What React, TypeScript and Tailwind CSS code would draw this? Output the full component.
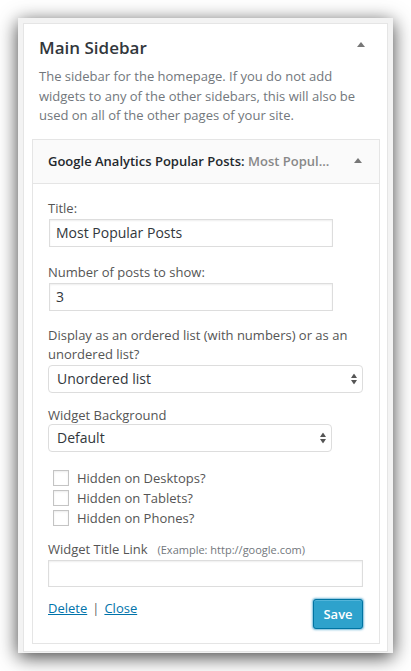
import React from "react";

function SelectArrows() {
  return (
    <svg width="6" height="11" viewBox="0 0 6 11" className="absolute right-[5px] top-1/2 -translate-y-1/2">
      <path d="M3 0 L6 4.5 L0 4.5 Z" fill="#555" />
      <path d="M3 11 L6 6.5 L0 6.5 Z" fill="#555" />
    </svg>
  );
}

function Triangle() {
  return (
    <svg width="8" height="5" viewBox="0 0 8 5" className="shrink-0">
      <path d="M4 0 L8 5 L0 5 Z" fill="#777" />
    </svg>
  );
}

function Checkbox({ label }: { label: string }) {
  return (
    <div className="flex items-center h-[20px]">
      <div className="w-[16px] h-[16px] ml-[5px] border border-[#c4c4c4] bg-white shadow-[inset_0_1px_2px_rgba(0,0,0,0.08)]" />
      <span className="ml-[8px] text-[13px] leading-[20px] text-[#555]">{label}</span>
    </div>
  );
}

export default function App() {
  return (
    <div className="w-[411px] h-[671px] bg-white overflow-hidden" style={{ fontFamily: '"Open Sans", "Noto Sans", sans-serif' }}>
      <div className="pt-[18px] pl-[18px]">
        <div className="w-[375px] h-[635px] bg-[#f3f3f3] p-[5px] pb-[1px] shadow-[0_4px_18px_rgba(0,0,0,0.75)]">
          <div className="h-full bg-white border border-[#e5e5e5]">
            <div className="flex items-start justify-between pl-[15px] pr-[22px] pt-[11px]">
              <h2 className="text-[17px] leading-[25px] font-semibold text-[#32373c]">Main Sidebar</h2>
              <div className="mt-[7px]">
                <Triangle />
              </div>
            </div>
            <p className="mt-[7px] pl-[15px] pr-[7px] text-[13px] leading-[19.5px] text-[#72777c]">
              The sidebar for the homepage. If you do not add widgets to any of the other sidebars, this will also be used on all of the other pages of your site.
            </p>
            <div className="mt-[13.5px] ml-[8px] w-[348px] h-[505px] border border-[#e5e5e5]">
              <div className="h-[44px] bg-[#fafafa] border-b border-[#e5e5e5] flex items-center justify-between pl-[15px] pr-[17px]">
                <div className="text-[13px] leading-[19.5px] font-semibold text-[#23282d] whitespace-nowrap">
                  Google Analytics Popular Posts: <span className="text-[#888]">Most Popul...</span>
                </div>
                <div className="mt-[-2px]">
                  <Triangle />
                </div>
              </div>
              <div className="pl-[15px] pt-[14.5px] text-[13px] leading-[19.5px] text-[#555]">
                <div>Title:</div>
                <div className="mt-[1px] ml-[1px] w-[284px] h-[28px] border border-[#ddd] shadow-[inset_0_1px_2px_rgba(0,0,0,0.07)] flex items-center px-[6px] text-[14px] text-[#32373c]">
                  Most Popular Posts
                </div>
                <div className="mt-[16px]">Number of posts to show:</div>
                <div className="ml-[1px] w-[284px] h-[28px] border border-[#ddd] shadow-[inset_0_1px_2px_rgba(0,0,0,0.07)] flex items-center px-[6px] text-[14px] text-[#32373c]">
                  3
                </div>
                <div className="mt-[15px] whitespace-nowrap">
                  Display as an ordered list (with numbers) or as an
                  <br />
                  unordered list?
                </div>
                <div className="relative w-[315px] h-[28px] border border-[#ddd] rounded-[4px] bg-white flex items-center px-[8px] text-[14px] text-[#32373c]">
                  Unordered list
                  <SelectArrows />
                </div>
                <div className="mt-[13.5px]">Widget Background</div>
                <div className="mt-[-1.5px] relative w-[284px] h-[28px] border border-[#ddd] rounded-[4px] bg-white flex items-center px-[8px] text-[14px] text-[#32373c]">
                  Default
                  <SelectArrows />
                </div>
                <div className="mt-[16px] flex flex-col">
                  <Checkbox label="Hidden on Desktops?" />
                  <Checkbox label="Hidden on Tablets?" />
                  <Checkbox label="Hidden on Phones?" />
                </div>
                <div className="mt-[12px] flex items-baseline">
                  <span>Widget Title Link</span>
                  <span className="ml-[10px] text-[11px] text-[#72777c]">(Example: http://google.com)</span>
                </div>
                <div className="mt-[0.5px] w-[315px] h-[27px] border border-[#ddd] shadow-[inset_0_1px_2px_rgba(0,0,0,0.07)]" />
                <div className="mt-[11.5px] w-[315px] flex justify-between items-start">
                  <div className="flex">
                    <a className="text-[#0073aa] underline">Delete</a>
                    <span className="text-[#666] mx-[5px]">|</span>
                    <a className="text-[#0073aa] underline">Close</a>
                  </div>
                  <button className="mt-[0.5px] w-[50px] h-[30px] bg-[#2ea2cc] border border-[#0074a2] rounded-[3px] text-white text-[13px] font-semibold leading-none shadow-[inset_0_1px_0_rgba(120,200,230,0.5),0_0_2px_1px_rgba(30,140,190,0.6)]">
                    Save
                  </button>
                </div>
              </div>
            </div>
          </div>
        </div>
      </div>
    </div>
  );
}
